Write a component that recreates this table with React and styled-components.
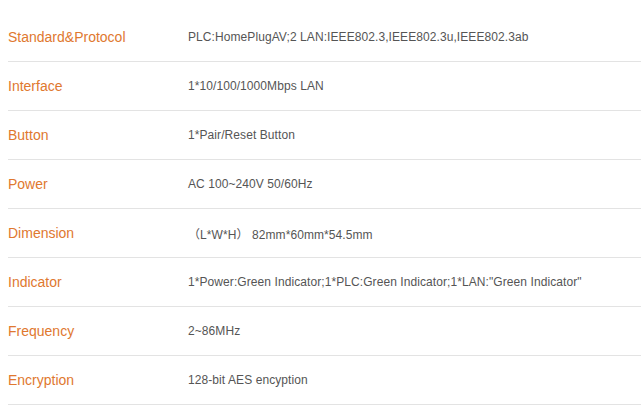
import { createGlobalStyle, styled } from "styled-components"

const Global = createGlobalStyle`
  html, body {
    margin: 0;
    padding: 0;
    background: #ffffff;
  }
`

const Table = styled.div`
  padding: 13px 0 0 8px;
  font-family: "Liberation Sans", Arial, "Noto Sans CJK SC", sans-serif;
`

const Row = styled.div`
  display: flex;
  align-items: center;
  height: 48px;
  border-bottom: 1px solid #e3e3e3;
`

const Label = styled.div`
  width: 180px;
  flex-shrink: 0;
  font-size: 14px;
  color: #e0782f;
`

const Value = styled.div`
  font-size: 12px;
  letter-spacing: 0.08px;
  color: #555555;
  white-space: nowrap;
`

const specs = [
  ["Standard&Protocol", "PLC:HomePlugAV;2 LAN:IEEE802.3,IEEE802.3u,IEEE802.3ab"],
  ["Interface", "1*10/100/1000Mbps LAN"],
  ["Button", "1*Pair/Reset Button"],
  ["Power", "AC 100~240V 50/60Hz"],
  ["Dimension", "（L*W*H）\u00a082mm*60mm*54.5mm"],
  ["Indicator", "1*Power:Green Indicator;1*PLC:Green Indicator;1*LAN:\"Green Indicator\""],
  ["Frequency", "2~86MHz"],
  ["Encryption", "128-bit AES encyption"],
]

const App = () => {
  return (
    <>
      <Global />
      <Table>
        {specs.map(([label, value]) => (
          <Row key={label}>
            <Label>{label}</Label>
            <Value>{value}</Value>
          </Row>
        ))}
      </Table>
    </>
  )
}

export default App
